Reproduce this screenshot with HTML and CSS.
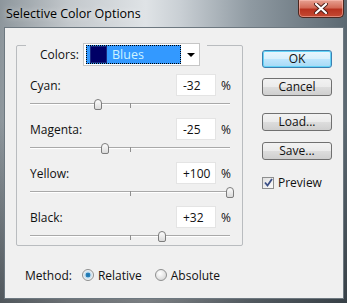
FILE: index.html
```html
<!DOCTYPE html>
<html lang="en">
<head>
  <meta charset="UTF-8">
  <meta name="viewport" content="width=device-width, initial-scale=1.0">
  <title>Selective Color Options</title>
  <link rel="stylesheet" href="styles.css">
</head>
<body>
  <div class="window">
    <div class="titlebar">
      <span class="title">Selective Color Options</span>
      <div class="close">
        <svg width="14" height="11" viewBox="0 0 14 11">
          <path d="M2 1 L12 10 M12 1 L2 10" stroke="#4a1e18" stroke-width="4" stroke-linecap="round"/>
          <path d="M2 1 L12 10 M12 1 L2 10" stroke="#fff" stroke-width="2.2" stroke-linecap="round"/>
        </svg>
      </div>
    </div>

    <div class="client">
      <div class="main">
        <div class="group">
          <div class="group-head">
            <span class="head-label">Colors:</span>
            <div class="select">
              <div class="select-value">
                <span class="swatch"></span>
                <span>Blues</span>
              </div>
              <span class="arrow"></span>
            </div>
          </div>

          <div class="adjust">
            <div class="field">
              <span class="label">Cyan:</span>
              <input class="num" type="text" value="-32">
              <span class="pct">%</span>
            </div>
            <div class="slider">
              <div class="track"><span class="tick"></span></div>
              <span class="thumb" style="left: 68px"></span>
            </div>

            <div class="field">
              <span class="label">Magenta:</span>
              <input class="num" type="text" value="-25">
              <span class="pct">%</span>
            </div>
            <div class="slider">
              <div class="track"><span class="tick"></span></div>
              <span class="thumb" style="left: 75px"></span>
            </div>

            <div class="field">
              <span class="label">Yellow:</span>
              <input class="num" type="text" value="+100">
              <span class="pct">%</span>
            </div>
            <div class="slider">
              <div class="track"><span class="tick"></span></div>
              <span class="thumb" style="left: 200px"></span>
            </div>

            <div class="field">
              <span class="label">Black:</span>
              <input class="num" type="text" value="+32">
              <span class="pct">%</span>
            </div>
            <div class="slider">
              <div class="track"><span class="tick"></span></div>
              <span class="thumb" style="left: 132px"></span>
            </div>
          </div>
        </div>

        <div class="method">
          <span class="method-label">Method:</span>
          <span class="radio checked"></span>
          <span class="radio-text">Relative</span>
          <span class="radio"></span>
          <span class="radio-text">Absolute</span>
        </div>
      </div>

      <div class="side">
        <button class="btn default">OK</button>
        <button class="btn cancel">Cancel</button>
        <button class="btn load">Load...</button>
        <button class="btn save">Save...</button>
        <div class="preview">
          <span class="check">
            <svg width="9" height="9" viewBox="0 0 9 9">
              <path d="M1 4.5 L3.5 7.5 L8 1" fill="none" stroke="#3b4f86" stroke-width="1.8"/>
            </svg>
          </span>
          <span>Preview</span>
        </div>
      </div>
    </div>
  </div>
</body>
</html>
```

FILE: styles.css
```css
body {
  margin: 0;
  font-family: "Open Sans", "Liberation Sans", sans-serif;
  font-size: 12px;
  color: #111;
}

.window {
  width: 347px;
  height: 303px;
  box-sizing: border-box;
  background:
    linear-gradient(to bottom, rgba(0, 0, 0, 0) 0%, rgba(0, 0, 0, 0) 40%, rgba(20, 24, 28, 0.5) 100%),
    linear-gradient(to right, #8d969c 0%, #c3c8cc 20%, #dfe3e6 42%, #c9cfd4 52%, #8f9aa2 72%, #5b6871 100%);
  overflow: hidden;
}

.titlebar {
  height: 27px;
  display: flex;
  justify-content: space-between;
  align-items: flex-start;
}

.title {
  margin: 5px 0 0 6px;
  font-size: 12.5px;
  color: #000;
  text-shadow: 0 0 6px rgba(255, 255, 255, 0.8);
}

.close {
  width: 46px;
  height: 18px;
  margin-right: 3px;
  box-sizing: border-box;
  border: 1px solid #4b2720;
  border-top: none;
  border-radius: 0 0 5px 5px;
  background: linear-gradient(to bottom, #e7a192 0%, #d36b58 45%, #b7321f 55%, #c44a33 100%);
  box-shadow: inset 0 0 0 1px rgba(255, 200, 190, 0.5);
  display: flex;
  align-items: center;
  justify-content: center;
}

.client {
  margin: 0 3px 0 4px;
  height: 272px;
  box-sizing: border-box;
  background: #f0f0f0;
  border: 1px solid #6d7880;
  padding: 10px 0 0 11px;
  display: flex;
}

.main {
  width: 227px;
  padding-top: 7px;
}

.group {
  height: 201px;
  box-sizing: border-box;
  border: 1px solid #b9bcbf;
  border-radius: 2px;
}

.group-head {
  display: inline-flex;
  align-items: center;
  margin: -8px 0 0 9px;
  padding: 0 7px 0 14px;
  background: #f0f0f0;
  height: 23px;
}

.head-label {
  width: 43px;
}

.select {
  width: 117px;
  height: 23px;
  box-sizing: border-box;
  background: #fff;
  border: 1px solid #c6c6c6;
  padding: 1px 2px;
  display: flex;
  align-items: center;
}

.select-value {
  width: 95px;
  height: 19px;
  box-sizing: border-box;
  background: #3399ff;
  border: 1px dotted #000;
  color: #cdf3ff;
  display: flex;
  align-items: center;
  font-size: 12.5px;
}

.swatch {
  width: 15px;
  height: 15px;
  margin: 0 6px 0 4px;
  background: #000066;
  box-shadow: 0 0 0 1px #1a2a80;
}

.arrow {
  margin-left: 6px;
  width: 0;
  height: 0;
  border-left: 4px solid transparent;
  border-right: 4px solid transparent;
  border-top: 4px solid #000;
}

.adjust {
  padding: 8px 0 0 13px;
}

.field {
  height: 22px;
  display: flex;
  align-items: center;
}

.label {
  width: 146px;
}

.num {
  width: 40px;
  height: 22px;
  box-sizing: border-box;
  border: 1px solid #e4e4e4;
  background: #fff;
  padding: 0 0 0 6px;
  margin: 0;
  font-family: inherit;
  font-size: 12px;
  color: #111;
}

.pct {
  margin-left: 5px;
}

.slider {
  position: relative;
  width: 200px;
  height: 22px;
}

.track {
  position: relative;
  top: 7px;
  height: 1px;
  background: #a9a9a9;
  border-bottom: 1px solid #fff;
}

.tick {
  position: absolute;
  left: 100px;
  top: 0;
  width: 1px;
  height: 5px;
  background: #8f8f8f;
}

.thumb {
  position: absolute;
  top: 3px;
  width: 8px;
  height: 11px;
  margin-left: -4px;
  box-sizing: border-box;
  border: 1px solid #7d7d7d;
  border-radius: 4px 4px 2px 2px;
  background: linear-gradient(to bottom, #fdfdfd, #dadada);
}

.method {
  display: flex;
  align-items: center;
  margin-top: 21px;
  padding-left: 9px;
  height: 16px;
}

.method-label {
  margin-right: 10px;
}

.radio {
  width: 12px;
  height: 12px;
  box-sizing: border-box;
  border-radius: 50%;
  border: 1px solid #8e8f8f;
  background: radial-gradient(circle at 40% 35%, #ffffff 0%, #dcdcdc 70%);
  margin-right: 4px;
}

.radio.checked {
  background: radial-gradient(circle, #1f6fa3 0%, #2a85c0 30%, #bcd9ec 38%, #f4f4f4 70%);
}

.radio-text {
  margin-right: 13px;
}

.side {
  margin-left: 19px;
  padding-top: 12px;
  display: flex;
  flex-direction: column;
}

.btn {
  width: 70px;
  height: 18px;
  padding: 0;
  box-sizing: border-box;
  border: 1px solid #707070;
  border-radius: 3px;
  background: linear-gradient(to bottom, #f2f2f2 0%, #ebebeb 50%, #dddddd 51%, #cfcfcf 100%);
  font-family: inherit;
  font-size: 12px;
  color: #111;
  line-height: 16px;
}

.btn.default {
  border-color: #3c7fb1;
  background: linear-gradient(to bottom, #eaf6fd 0%, #d9f0fc 50%, #bee6fd 51%, #a7d9f5 100%);
  box-shadow: inset 0 0 0 1px #63d3f7;
}

.cancel {
  margin-top: 10px;
}

.load {
  margin-top: 17px;
}

.save {
  margin-top: 11px;
}

.preview {
  margin-top: 14px;
  display: flex;
  align-items: center;
}

.check {
  width: 12px;
  height: 12px;
  box-sizing: border-box;
  border: 1px solid #8e8f8f;
  background: linear-gradient(to bottom right, #e0e0e0, #fbfbfb);
  margin-right: 4px;
  display: flex;
  align-items: center;
  justify-content: center;
}
```
